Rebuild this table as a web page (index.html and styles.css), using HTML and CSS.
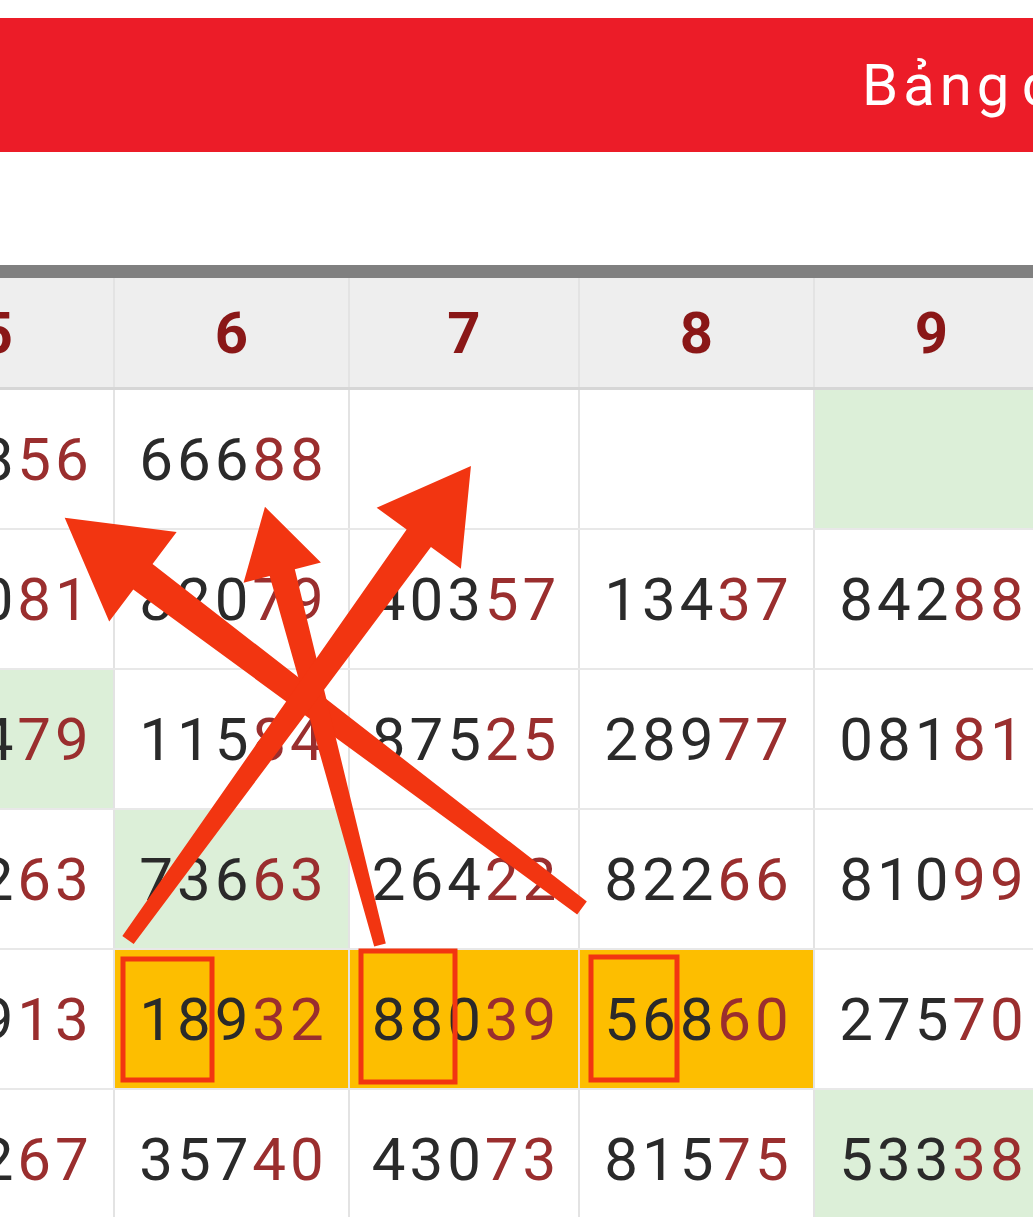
FILE: index.html
```html
<!DOCTYPE html>
<html lang="vi">
<head>
    <meta charset="UTF-8">
    <meta name="viewport" content="width=device-width, initial-scale=1.0">
    <title>Bảng đặc biệt tuần</title>
    <link rel="stylesheet" href="styles.css">
</head>
<body>
<div class="page">

    <div class="title-bar">
        <span class="title">Bảng đặc biệt tuần</span>
    </div>

    <table class="grid">
        <colgroup>
            <col class="w235">
            <col class="w235">
            <col class="w230">
            <col class="w235">
            <col class="w235">
        </colgroup>
        <thead>
            <tr><th>5</th><th>6</th><th>7</th><th>8</th><th>9</th></tr>
        </thead>
        <tbody>
            <tr>
                <td>728<b>56</b></td>
                <td>666<b>88</b></td>
                <td></td>
                <td></td>
                <td class="green"></td>
            </tr>
            <tr>
                <td>510<b>81</b></td>
                <td>820<b>79</b></td>
                <td>403<b>57</b></td>
                <td>134<b>37</b></td>
                <td>842<b>88</b></td>
            </tr>
            <tr>
                <td class="green">304<b>79</b></td>
                <td>115<b>84</b></td>
                <td>875<b>25</b></td>
                <td>289<b>77</b></td>
                <td>081<b>81</b></td>
            </tr>
            <tr>
                <td>452<b>63</b></td>
                <td class="green">736<b>63</b></td>
                <td>264<b>22</b></td>
                <td>822<b>66</b></td>
                <td>810<b>99</b></td>
            </tr>
            <tr>
                <td>679<b>13</b></td>
                <td class="gold">189<b>32</b></td>
                <td class="gold">880<b>39</b></td>
                <td class="gold">568<b>60</b></td>
                <td>275<b>70</b></td>
            </tr>
            <tr>
                <td>182<b>67</b></td>
                <td>357<b>40</b></td>
                <td>430<b>73</b></td>
                <td>815<b>75</b></td>
                <td class="green">533<b>38</b></td>
            </tr>
        </tbody>
    </table>

    <!-- markup drawn over the table -->
    <svg class="marks" width="1033" height="1217" viewBox="0 0 1033 1217">
        <g fill="#f23511">
            <polygon transform="translate(582 908) rotate(-142.97)"
                     points="0,-8 550,-16 550,-56 648,0 550,56 550,16 0,8"/>
            <polygon transform="translate(380 945) rotate(-104.71)"
                     points="0,-6 385,-13 385,-40 453,0 385,40 385,13 0,6"/>
            <polygon transform="translate(128 940) rotate(-54.11)"
                     points="0,-7 496,-15 496,-52 585,0 496,52 496,15 0,7"/>
        </g>
        <g fill="none" stroke="#f23511" stroke-width="5">
            <rect x="123" y="959" width="89" height="121"/>
            <rect x="361" y="951" width="94" height="131"/>
            <rect x="591" y="957" width="86" height="123"/>
        </g>
    </svg>

</div>
</body>
</html>
```

FILE: styles.css
```css
body {
    margin: 0;
    background: #fff;
    font-family: Roboto, "Liberation Sans", sans-serif;
}
.page {
    position: relative;
    width: 1033px;
    height: 1217px;
    overflow: hidden;
    background: #fff;
}
.title-bar {
    margin-top: 18px;
    height: 134px;
    line-height: 134px;
    background: #ec1c28;
    padding-left: 862px;
    white-space: nowrap;
    overflow: hidden;
}
.title {
    color: #fff;
    font-size: 58px;
    letter-spacing: 5px;
    word-spacing: -12px;
}
.grid {
    margin-top: 113px;
    margin-left: -122px;
    width: 1170px;
    table-layout: fixed;
    border-collapse: collapse;
    border-top: 13px solid #808080;
}
.w235 {
    width: 235px;
}
.w230 {
    width: 230px;
}
.grid th,
.grid td {
    border-left: 2px solid #e3e3e3;
    border-right: 2px solid #e3e3e3;
    text-align: center;
    padding: 0;
    white-space: nowrap;
}
.grid th {
    height: 109px;
    background: #eeeeee;
    border-bottom: 3px solid #d6d6d6;
    color: #8a1717;
    font-size: 58px;
    font-weight: bold;
}
.grid td {
    height: 138px;
    border-bottom: 2px solid #e8e8e8;
    color: #2a2a2a;
    font-size: 60px;
    letter-spacing: 4px;
    padding-left: 4px;
}
.grid td b {
    font-weight: normal;
    color: #9a2e2e;
}
.grid td.green {
    background: #dcefd8;
}
.grid td.gold {
    background: #fdbe00;
}
.marks {
    position: absolute;
    left: 0;
    top: 0;
    pointer-events: none;
}
```
